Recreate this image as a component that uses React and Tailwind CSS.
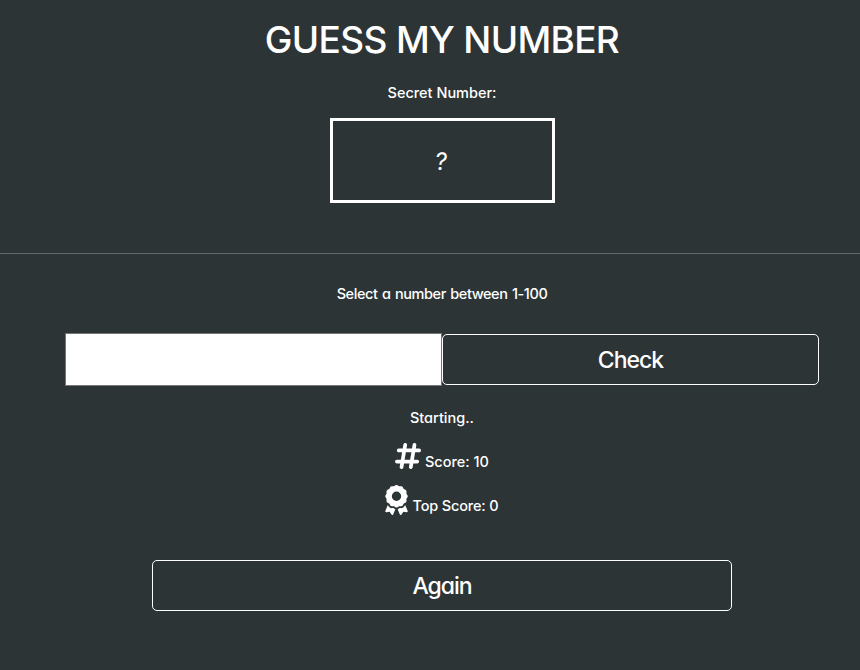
import { FaAward, FaHashtag } from "react-icons/fa6";

const small = "text-[14.5px] leading-6 whitespace-nowrap";
const button = "h-[51px] rounded-[5px] border border-white pt-px text-[23px] tracking-[-1px]";

export default function App() {
  return (
    <div className="h-[670px] w-full overflow-hidden bg-[#2d3436] font-['Inter','Open_Sans',sans-serif] font-medium text-white [font-feature-settings:'cv11','ss03']">
      <div className="flex w-[884px] flex-col items-center">
        <header className="flex h-[253px] flex-col items-center">
          <h1 className="mt-4 h-12 text-[37px] leading-12 tracking-[-0.65px] whitespace-nowrap">GUESS MY NUMBER</h1>
          <p className={`mt-[17px] ${small}`}>Secret Number:</p>
          <div className="mt-[13px] flex h-[85px] w-[225px] items-center justify-center border-3 border-white pt-[3px] pr-0.5 text-2xl font-normal">
            <span className="-skew-x-6">?</span>
          </div>
        </header>
        <hr className="w-full border-t border-[#636a6b]" />
        <main className="flex flex-col items-center">
          <p className={`mt-7 tracking-[-0.42px] [word-spacing:1px] ${small}`}>Select a number between 1-100</p>
          <div className="mt-[27px] flex h-[53px] items-center">
            <input className="h-[53px] w-[377px] border border-[#767676] bg-white text-black outline-none" />
            <button className={`w-[377px] ${button}`}>Check</button>
          </div>
          <p className={`mt-5 ${small}`}>Starting..</p>
          <div className="mt-[11px] flex h-[30px] items-center gap-1">
            <FaHashtag className="h-[30px] w-[26px]" />
            <span className={`mt-[11px] ${small}`}>Score: 10</span>
          </div>
          <div className="mt-[14px] flex h-[30px] items-center gap-1">
            <FaAward className="h-[30px] w-[23px]" />
            <span className={`mt-[11px] tracking-[-0.15px] ${small}`}>Top Score: 0</span>
          </div>
          <button className={`mt-[45px] w-[580px] ${button}`}>Again</button>
        </main>
      </div>
    </div>
  );
}
